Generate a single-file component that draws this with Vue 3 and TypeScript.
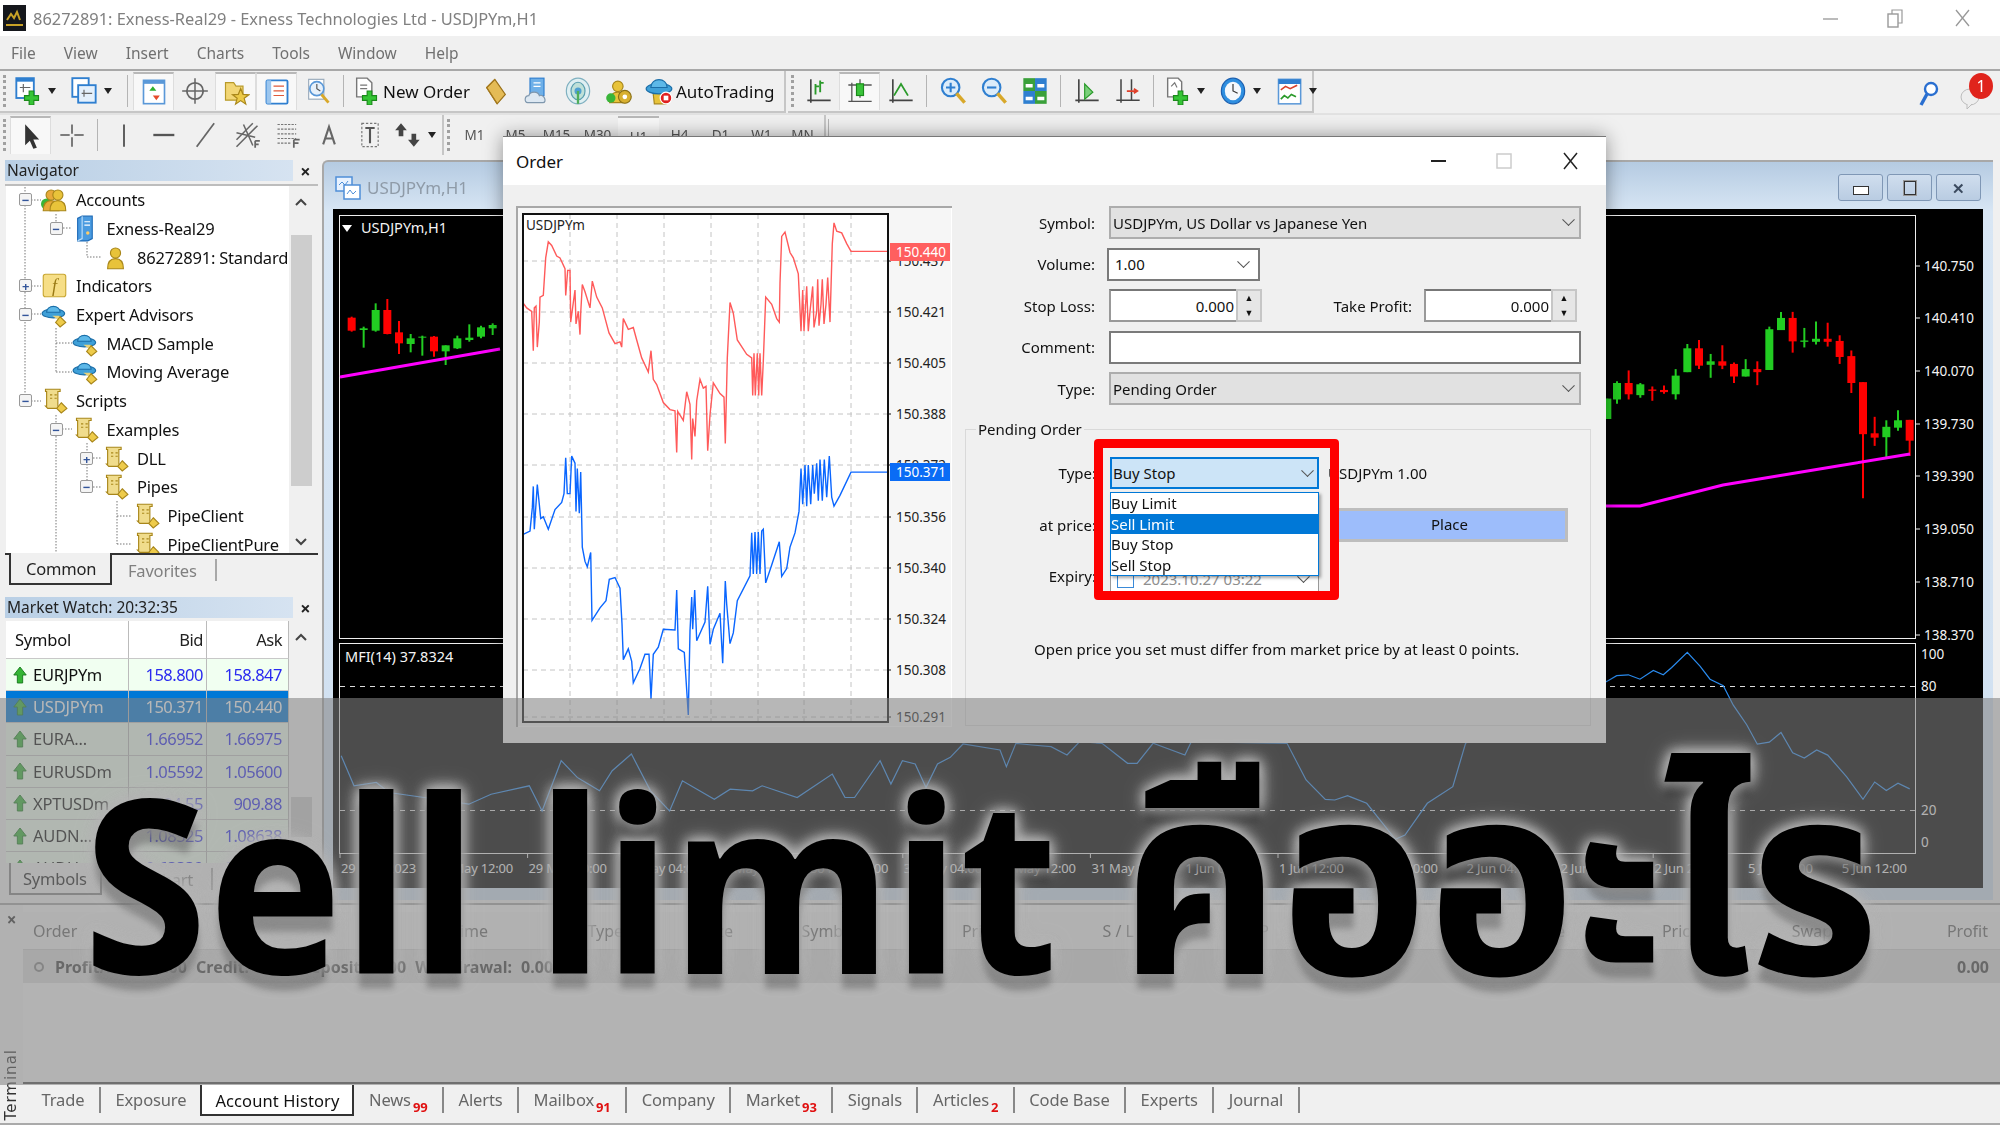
<template>
  <div class="shot">
    <div class="base">
      <div class="titlebar">
        <svg class="app-logo" viewBox="0 0 23 26"><rect width="23" height="26" fill="#15171c" /><path d="M4 15l4-6 3 4 3-6 3 8" fill="none" stroke="#c9a227" stroke-width="2" /><rect x="3" y="19" width="17" height="2" fill="#c9a227" /></svg>
        <span class="title-text">86272891: Exness-Real29 - Exness Technologies Ltd - USDJPYm,H1</span>
        <div class="win-ctl">
          <svg viewBox="0 0 150 24" width="150" height="24"><path d="M1 13h15" stroke="#aaa" stroke-width="1.6" /><rect x="66" y="8" width="10" height="13" fill="none" stroke="#999" stroke-width="1.4" /><path d="M70 8V4h10v13h-4" fill="none" stroke="#999" stroke-width="1.2" /><path d="M134 4l13 16M147 4l-13 16" stroke="#999" stroke-width="1.3" /></svg>
        </div>
      </div>
      <div class="menubar">
        <span v-for="m in menus" :key="m" class="menu-item">{{ m }}</span>
      </div>
      <div class="toolrow">
        <div v-for="(bar, i) in [tb1, tb2]" :key="i" class="toolbar" :class="'bar' + i">
          <template v-for="(it, n) in bar" :key="n">
            <i v-if="it.kind == 'grip'" class="grip"></i>
            <i v-else-if="it.kind == 'sep'" class="sep"></i>
            <div v-else class="tool" :class="{ sel: it.sel, drop: it.arrow, wide: it.label }">
              <svg class="ic" viewBox="0 0 24 24" v-html="icons[it.icon!]"></svg>
              <span v-if="it.label" class="tool-label">{{ it.label }}</span>
              <b v-if="it.arrow" class="caret"></b>
            </div>
          </template>
        </div>
        <div class="tool-right">
          <svg width="24" height="30" viewBox="0 0 24 30"><circle cx="14" cy="10" r="6" fill="#fff" stroke="#2a6fd0" stroke-width="2.4" /><path d="M10 15L4 26" stroke="#2a6fd0" stroke-width="3.4" /></svg>
          <div class="notif">
            <svg width="30" height="34" viewBox="0 0 30 34"><ellipse cx="11" cy="21" rx="9" ry="8" fill="#eee" stroke="#bbb" /><path d="M8 28v5l5-5" fill="#eee" stroke="#bbb" /></svg>
            <span class="badge">1</span>
          </div>
        </div>
      </div>
      <div class="toolrow second">
        <div class="toolbar bar2">
          <template v-for="(it, n) in tb3" :key="n">
            <i v-if="it.kind == 'grip'" class="grip"></i>
            <i v-else-if="it.kind == 'sep'" class="sep"></i>
            <div v-else class="tool" :class="{ sel: it.sel, drop: it.arrow }">
              <svg class="ic" viewBox="0 0 24 24" v-html="icons[it.icon!]"></svg>
              <b v-if="it.arrow" class="caret"></b>
            </div>
          </template>
        </div>
        <div class="toolbar bar3">
          <i class="grip"></i>
          <span v-for="t in frames" :key="t" class="frame" :class="{ sel: t == 'H1' }">{{ t }}</span>
          <i class="sep"></i>
        </div>
      </div>

      <div class="workspace">
        <div class="side">
          <div class="panel nav-panel">
            <div class="panel-head"><span>Navigator</span><em>×</em></div>
            <div class="tree-wrap">
              <div class="tree">
                <svg class="tree-lines" viewBox="6 184 282 369" width="282" height="369">
                  <path d="M25 184V401M25 200h16M25 286h16M25 314h16M25 401h16M56 214v14h16M87 242v15h14M56 328v44M56 343h16M56 372h16M56 415V553M56 429h16M87 443v44M87 458h14M87 487h14M117 501v43M117 516h14M117 544h14" fill="none" stroke="#777" stroke-dasharray="1.5 1.5" />
                </svg>
                <div v-for="row in tree" :key="row.text" class="tree-row" :style="{ paddingLeft: 13 + row.level * 30.5 + 'px' }">
                  <span class="expander" :class="{ none: !row.exp }">{{ row.exp }}</span>
                  <svg class="tree-icon" viewBox="0 0 24 24" v-html="icons[row.icon]"></svg>
                  <span class="tree-text">{{ row.text }}</span>
                </div>
              </div>
              <div class="vscroll">
                <svg class="chev" viewBox="0 0 14 8" width="14" height="8"><path d="M2 7l5-5 5 5" fill="none" stroke="#444" stroke-width="2" /></svg>
                <div class="thumb"></div>
                <svg class="chev down" viewBox="0 0 14 8" width="14" height="8"><path d="M2 1l5 5 5-5" fill="none" stroke="#444" stroke-width="2" /></svg>
              </div>
            </div>
            <div class="tabs">
              <span class="tab on">Common</span>
              <span class="tab">Favorites</span>
              <i class="tab-sep"></i>
            </div>
          </div>

          <div class="panel mw-panel">
            <div class="panel-head"><span>Market Watch: 20:32:35</span><em>×</em></div>
            <div class="mw-wrap">
              <div class="mw-table">
                <div class="mw-row mw-head"><span class="sym">Symbol</span><span class="num">Bid</span><span class="num">Ask</span></div>
                <div v-for="q in quotes" :key="q.sym" class="mw-row" :class="{ active: q.sym == 'USDJPYm' }">
                  <span class="sym">
                    <svg width="16" height="22" viewBox="0 0 18 22"><path d="M9 2l7 9h-4v9H6v-9H2z" fill="#35b535" stroke="#14761a" /></svg>
                    {{ q.sym }}
                  </span>
                  <span class="num">{{ q.bid }}</span><span class="num">{{ q.ask }}</span>
                </div>
              </div>
              <div class="vscroll mw-scroll">
                <svg class="chev" viewBox="0 0 14 8" width="14" height="8"><path d="M2 7l5-5 5 5" fill="none" stroke="#444" stroke-width="2" /></svg>
                <div class="thumb"></div>
              </div>
            </div>
            <div class="tabs">
              <span class="tab on">Symbols</span>
              <span class="tab">Tick Chart</span>
              <i class="tab-sep"></i>
            </div>
          </div>
        </div>

        <div class="chart-win">
          <div class="chart-head">
            <svg width="26" height="24" viewBox="0 0 26 24"><rect x="1" y="1" width="16" height="14" fill="#e8f2ff" stroke="#4f8fd8" stroke-width="1.5" /><rect x="9" y="9" width="16" height="14" fill="#fff" stroke="#4f8fd8" stroke-width="1.5" /><path d="M4 9l3-3 3 3 3-4M12 18l3-4 3 4 3-3" fill="none" stroke="#4f8fd8" /></svg>
            <span class="chart-name">USDJPYm,H1</span>
            <div class="chart-btns">
              <span class="cbtn"><i class="c-min"></i></span>
              <span class="cbtn"><i class="c-max"></i></span>
              <span class="cbtn c-x">✕</span>
            </div>
          </div>
          <svg class="chart-svg" viewBox="333 209 1650 679" width="1650" height="679">
            <rect x="333" y="209" width="1650" height="679" fill="#000" />
            <rect x="339.5" y="215.5" width="1576" height="423" fill="none" stroke="#eee" />
            <rect x="339.5" y="643.5" width="1576" height="210" fill="none" stroke="#eee" />
            <path d="M342 225h10l-5 7z" fill="#fff" />
            <text x="361" y="233" class="c-txt">USDJPYm,H1</text>
            <text x="345" y="662" class="c-txt">MFI(14) 37.8324</text>
            <template v-for="(c, i) in candles" :key="i">
              <line :x1="c.x" :x2="c.x" :y1="c.wt" :y2="c.wb" :stroke="c.col" stroke-width="2" />
              <rect :x="c.x - 4" :y="c.t" width="8" :height="c.b - c.t" :fill="c.col" />
            </template>
            <polyline points="340,377 420,363 500,349" fill="none" stroke="#ff00ff" stroke-width="3" />
            <polyline points="1606,506 1640,506 1723,485 1910,454" fill="none" stroke="#ff00ff" stroke-width="3" />
            <path d="M340 686.5H1916M340 810.5H1916" stroke="#ddd" stroke-dasharray="5 5" />
            <polyline :points="mfi" fill="none" stroke="#2a8cf0" stroke-width="1.2" />
            <template v-for="p in mainAxis" :key="p.t">
              <path :d="`M1916 ${p.y}h4`" stroke="#eee" />
              <text x="1924" :y="p.y + 5" class="c-txt axis">{{ p.t }}</text>
            </template>
            <text v-for="p in subAxis" :key="p.t" x="1921" :y="p.y + 5" class="c-txt axis">{{ p.t }}</text>
            <template v-for="p in timeAxis" :key="p.t">
              <path v-if="p.tick" :d="`M${p.x} 853v5`" stroke="#eee" />
              <text :x="p.x + 1" y="873" class="c-txt tick">{{ p.t }}</text>
            </template>
          </svg>
        </div>
      </div>

      <div class="terminal">
        <div class="term-main">
          <div class="term-side">
            <em>×</em>
            <span class="term-label">Terminal</span>
          </div>
          <div class="term-body">
            <div class="term-cols">
              <span v-for="(c, i) in termCols" :key="i" :class="{ left: i == 0 }">{{ c }}</span>
            </div>
            <div class="term-total">
              <span class="term-note"><i class="dot"></i>Profit/Loss: 0.00 Credit: 0.00 Deposit: 0.00 Withdrawal: 0.00</span>
              <span>0.00</span>
            </div>
          </div>
        </div>
        <div class="term-tabs">
          <span v-for="t in termTabs" :key="t.name" class="ttab" :class="{ on: t.name == 'Account History', flat: t.name == 'Exposure' }">{{ t.name }}<sub v-if="t.n">{{ t.n }}</sub></span>
        </div>
      </div>
    </div>

    <div class="order-dlg">
      <div class="dlg-title">
        <span>Order</span>
        <svg width="150" height="24" viewBox="0 0 150 24"><path d="M0 12h15" stroke="#222" stroke-width="2" /><rect x="66" y="5" width="14" height="14" fill="#fff" stroke="#ccc" stroke-width="1.5" /><path d="M133 4l13 16M146 4l-13 16" stroke="#222" stroke-width="1.5" /></svg>
      </div>
      <div class="dlg-body">
        <div class="mini">
          <svg viewBox="516 206 436 521" width="436" height="521">
            <rect x="523" y="214" width="365" height="508" fill="#fff" />
            <path v-for="g in miniGridX" :key="g" :d="`M${g} 214V722`" stroke="#c4c4c4" stroke-dasharray="5 4" />
            <path v-for="g in miniAxis" :key="g.t" :d="`M523 ${g.y}H888`" stroke="#c4c4c4" stroke-dasharray="5 4" />
            <polyline :points="askLine" fill="none" stroke="#ff5a5a" stroke-width="1.4" />
            <polyline :points="bidLine" fill="none" stroke="#0a66ff" stroke-width="1.4" />
            <rect x="523" y="214" width="365" height="508" fill="none" stroke="#111" stroke-width="2" />
            <text x="526" y="230" class="m-txt">USDJPYm</text>
            <template v-for="g in miniAxis" :key="g.t">
              <path :d="`M888 ${g.y}h3`" stroke="#111" />
              <text x="896" :y="g.y + 5" class="m-txt">{{ g.t }}</text>
            </template>
            <rect x="890" y="243" width="60" height="18" fill="#ff5f5f" />
            <text x="896" y="257" class="m-txt w">150.440</text>
            <rect x="890" y="463" width="60" height="18" fill="#0a6cf5" />
            <text x="896" y="477" class="m-txt w">150.371</text>
          </svg>
        </div>
        <div class="form">
          <div class="f-row"><label>Symbol:</label><div class="ctl select"><span>USDJPYm, US Dollar vs Japanese Yen</span><i class="vee"></i></div></div>
          <div class="f-row"><label>Volume:</label><div class="ctl input short"><span>1.00</span><i class="vee"></i></div></div>
          <div class="f-row tight">
            <label>Stop Loss:</label>
            <div class="ctl input short spin"><span>0.000</span><div class="spinner"><b>▲</b><b>▼</b></div></div>
            <label class="tp">Take Profit:</label>
            <div class="ctl input short spin"><span>0.000</span><div class="spinner"><b>▲</b><b>▼</b></div></div>
          </div>
          <div class="f-row tight"><label>Comment:</label><div class="ctl input"></div></div>
          <div class="f-row"><label>Type:</label><div class="ctl select"><span>Pending Order</span><i class="vee"></i></div></div>

          <div class="group">
            <span class="legend">Pending Order</span>
            <div class="g-row first">
              <label>Type:</label>
              <div class="ctl focus"><span>Buy Stop</span><i class="vee"></i>
                <div class="listbox">
                  <div v-for="o in pendingTypes" :key="o" class="opt" :class="{ hit: o == 'Sell Limit' }">{{ o }}</div>
                </div>
              </div>
              <span class="g-note">USDJPYm 1.00</span>
            </div>
            <div class="g-row mid">
              <label>at price:</label>
              <div class="ctl input mid-input"></div>
              <div class="place">Place</div>
            </div>
            <div class="g-row">
              <label>Expiry:</label>
              <div class="ctl input mid-input exp"><i class="chk"></i><span>2023.10.27 03:22</span><i class="vee"></i></div>
            </div>
            <p class="msg">Open price you set must differ from market price by at least 0 points.</p>
            <div class="redbox"></div>
          </div>
        </div>
      </div>
    </div>

    <div class="dim"></div>
    <div class="headline"><span>Sell limit</span><span class="th">คืออะไร</span></div>
  </div>
</template>

<script setup lang="ts">
import { computed } from 'vue'

interface Tool {
  kind?: string
  icon?: string
  sel?: boolean
  arrow?: boolean
  label?: string
}

const menus = ['File', 'View', 'Insert', 'Charts', 'Tools', 'Window', 'Help']
const frames = ['M1', 'M5', 'M15', 'M30', 'H1', 'H4', 'D1', 'W1', 'MN']
const pendingTypes = ['Buy Limit', 'Sell Limit', 'Buy Stop', 'Sell Stop']

const goldFig = (x: number, c = '#e8c33a') =>
  `<circle cx="${x}" cy="8" r="4.5" fill="${c}" stroke="#a8861a"/><path d="M${x - 7} 22c0-7 3-9 7-9s7 2 7 9z" fill="${c}" stroke="#a8861a"/>`
const hat =
  '<ellipse cx="11" cy="11" rx="10" ry="4" fill="#3fa0d8" stroke="#1b6ea8"/><path d="M5 10c0-7 12-7 12 0z" fill="#5db8e8" stroke="#1b6ea8"/><path d="M10 13h6l3 3-2 2z" fill="#e8d27a"/><path d="M17 14l5 5-5 4-4-4z" fill="#eecb4a" stroke="#a8861a"/>'
const scroll =
  '<path d="M4 2h13v2h-2v13l2 2H6l-2-2h1V4H4z" fill="#f0dc8c" stroke="#a8861a"/><path d="M8 7h2M12 7h2M8 10h2M12 10h2" stroke="#a8861a"/><path d="M18 14l5 5-5 4-4-4z" fill="#eecb4a" stroke="#a8861a"/>'
const plus = '<path d="M13 12h4v4h4v4h-4v4h-4v-4H9v-4h4z" fill="#35c535" stroke="#1a8a1a"/>'

const icons: Record<string, string> = {
  newChart: '<rect x="2" y="1" width="15" height="17" fill="#fff" stroke="#2f7fd0" stroke-width="1.6"/><rect x="2" y="1" width="15" height="3" fill="#2f7fd0"/><path d="M5 9h9M8 6v7" stroke="#666"/>' + plus,
  profile: '<rect x="2" y="1" width="14" height="16" fill="#fff" stroke="#2f7fd0" stroke-width="1.6"/><rect x="7" y="7" width="15" height="15" fill="#e4f0fc" stroke="#2f7fd0" stroke-width="1.6"/><path d="M10 14h9M12 11v6" stroke="#666"/>',
  watch: '<rect x="3" y="2" width="18" height="20" fill="#fff" stroke="#5a98d8" stroke-width="1.4"/><rect x="3" y="2" width="18" height="3" fill="#5a98d8"/><path d="M11 7l3 4H8z" fill="#2db02d"/><path d="M14 19l-3-4h6z" fill="#e64a2a"/>',
  cross: '<circle cx="12" cy="12" r="7" fill="none" stroke="#666" stroke-width="1.5"/><path d="M12 1v22M1 12h22" stroke="#666" stroke-width="1.3"/>',
  folder: '<path d="M3 4h7l2 3h6v12H3z" fill="#f2d675" stroke="#b89a2a"/><path d="M16 9l2 5 5 .4-4 3 1.4 5-4.4-3-4.4 3 1.4-5-4-3 5-.4z" fill="#ecca48" stroke="#a8861a"/>',
  list: '<rect x="3" y="2" width="18" height="20" rx="1" fill="#fff" stroke="#2f7fd0" stroke-width="1.6"/><path d="M3 2h4v20H3z" fill="#9cc6ee"/><path d="M9 7h9M9 11h9M9 15h9" stroke="#e05a3a"/>',
  tester: '<rect x="4" y="2" width="13" height="17" fill="#fff" stroke="#9ab"/><circle cx="11" cy="10" r="6" fill="#e6f0fa" stroke="#5a98d8" stroke-width="1.4"/><path d="M11 6v4l3 2" fill="none" stroke="#555"/><path d="M15 15l6 7" stroke="#d8a82a" stroke-width="2.4"/>',
  order: '<path d="M4 1h9l4 4v12H4z" fill="#fff" stroke="#777" stroke-width="1.2"/><path d="M7 7h6M7 10h6" stroke="#777"/>' + plus,
  diamond: '<path d="M11 2l9 13-7 8-9-14z" fill="#e4bb56" stroke="#99701a"/><path d="M11 2l-7 7 9 14" fill="none" stroke="#a67a1e"/>',
  cloud: '<rect x="6" y="1" width="12" height="15" fill="#6fb0e8" stroke="#2f7fd0"/><path d="M9 5h6M9 8h6" stroke="#fff"/><path d="M4 22c-3 0-3-6 1-6 1-4 8-4 9 0 4-2 7 6 3 6z" fill="#dde8f2" stroke="#7f97ad"/>',
  signal: '<ellipse cx="12" cy="12" rx="10" ry="11" fill="#dfeff2" stroke="#7fb0c0"/><ellipse cx="12" cy="12" rx="6" ry="7.5" fill="#bfe0d8" stroke="#5a9fb0"/><circle cx="12" cy="12" r="3" fill="#4f9fd0"/><path d="M12 12v11" stroke="#4fae5a" stroke-width="2"/>',
  people: goldFig(11) + '<circle cx="17" cy="17" r="5.5" fill="#d8b030" stroke="#8a7016"/><circle cx="17" cy="17" r="2" fill="#fff"/><circle cx="5" cy="18" r="4" fill="#39b539"/>',
  auto: '<path d="M7 14h13l-2 9H8z" fill="#e8c33a" stroke="#a8861a"/><ellipse cx="12" cy="10" rx="11" ry="4.5" fill="#3fa0d8" stroke="#1b6ea8"/><path d="M5 9c0-9 14-9 14 0z" fill="#5db8e8" stroke="#1b6ea8"/><circle cx="18" cy="18" r="5" fill="#e02020" stroke="#fff"/><rect x="16" y="16" width="4" height="4" fill="#fff"/>',
  bars: '<path d="M5 2v20M2 20h20" stroke="#444" stroke-width="1.4"/><path d="M9 6v9M9 8h3M13 3v10M13 5h3" stroke="#2a9a2a" stroke-width="1.6"/>',
  candle: '<path d="M5 4v16M2 20h20M2 6h20M12 1v16" stroke="#555" stroke-width="1.1"/><rect x="9" y="5" width="6" height="10" fill="#3ac33a" stroke="#1a8a1a"/>',
  line: '<path d="M5 2v20M2 20h20" stroke="#444" stroke-width="1.4"/><path d="M6 16l6-10 6 10" fill="none" stroke="#2a9a2a" stroke-width="1.5"/>',
  zoomIn: '<circle cx="10" cy="9" r="7.5" fill="#dcecfa" stroke="#2f7fd0" stroke-width="1.8"/><path d="M10 5v8M6 9h8" stroke="#2f7fd0" stroke-width="1.8"/><path d="M15 14l7 8" stroke="#d8a82a" stroke-width="3"/>',
  zoomOut: '<circle cx="10" cy="9" r="7.5" fill="#dcecfa" stroke="#2f7fd0" stroke-width="1.8"/><path d="M6 9h8" stroke="#2f7fd0" stroke-width="1.8"/><path d="M15 14l7 8" stroke="#d8a82a" stroke-width="3"/>',
  tile: '<rect x="2" y="1" width="10" height="11" fill="#3aa03a"/><rect x="12" y="1" width="10" height="11" fill="#2f7fd0"/><rect x="2" y="12" width="10" height="11" fill="#2f7fd0"/><rect x="12" y="12" width="10" height="11" fill="#3aa03a"/><path d="M4 6h6v3H4zM14 6h6v3h-6zM4 17h6v3H4zM14 17h6v3h-6z" fill="#fff"/>',
  shift: '<path d="M5 2v20M2 20h20" stroke="#444" stroke-width="1.4"/><path d="M10 6l7 7-7 6z" fill="#7ad07a" stroke="#2a9a2a"/>',
  scaleFix: '<path d="M6 2v20M2 20h20M15 2v18" stroke="#444" stroke-width="1.3"/><path d="M11 12h8M17 10l3 2-3 2" stroke="#e0402a" stroke-width="1.5" fill="none"/>',
  indic: '<path d="M4 1h9l3 3v13H4z" fill="#fff" stroke="#777" stroke-width="1.2"/><path d="M7 8l3-3 2 4" fill="none" stroke="#777"/>' + plus,
  clock: '<ellipse cx="12" cy="12" rx="10" ry="11" fill="#2f8fe0" stroke="#1a5fb0"/><ellipse cx="12" cy="12" rx="7" ry="8" fill="#f4f8fc"/><path d="M12 6v6l4 2" fill="none" stroke="#333"/>',
  tpl: '<rect x="3" y="2" width="19" height="21" fill="#fff" stroke="#5a98d8" stroke-width="1.3"/><rect x="3" y="2" width="19" height="4" fill="#2f7fd0"/><path d="M5 11l4-3 4 2 6-3" fill="none" stroke="#d8402a" stroke-width="1.4"/><path d="M5 19l3-3 3 2 3-3 4 2" fill="none" stroke="#2a9a2a" stroke-width="1.4"/>',
  cursor: '<path d="M7 2v18l4-4 3 7 3-1-3-7h5z" fill="#333"/>',
  crossH: '<path d="M12 3v8M12 14v8M2 12h8M14 12h8" stroke="#555" stroke-width="1.3"/>',
  vline: '<path d="M12 3v19" stroke="#555" stroke-width="1.6"/>',
  hline: '<path d="M2 12h18" stroke="#555" stroke-width="2"/>',
  trend: '<path d="M4 22L19 2" stroke="#666" stroke-width="1.5"/>',
  channel: '<path d="M3 16L17 2M3 22L21 4M9 3l8 18M3 10l16 4" stroke="#666" stroke-width="1.3"/><path d="M19 17h4M19 17v6M19 20h3" stroke="#666" stroke-width="1.5"/>',
  fibo: '<path d="M3 3h16M3 7h16M3 11h16M3 15h16M3 19h11" stroke="#777" stroke-dasharray="2 1"/><path d="M17 16h5M17 16v7M17 19h4" stroke="#666" stroke-width="1.5"/>',
  letter: '<path d="M7 20l5-15 5 15M9 15h6" fill="none" stroke="#666" stroke-width="1.8"/>',
  label: '<rect x="5" y="2" width="14" height="20" fill="none" stroke="#777" stroke-dasharray="2 1.5"/><path d="M8 6h8M12 6v13" stroke="#555" stroke-width="1.8"/>',
  arrows: '<path d="M6 2l5 6H8v5H4V8H1zM17 22l-5-6h3v-5h4v5h3z" fill="#444"/>',
  accounts: '<circle cx="5" cy="16" r="5" fill="#39b539"/>' + goldFig(9, '#e8a93a') + goldFig(15),
  server: '<path d="M5 3l4-2h9v20l-4 2H5z" fill="#4a9be0" stroke="#1f6cb8"/><path d="M9 1v20l-4 2" fill="none" stroke="#bfe0fa"/><path d="M11 6h5M11 9h5" stroke="#fff"/><circle cx="14" cy="16" r="1.500" fill="#fc6"/>',
  user: goldFig(12),
  func: '<rect x="2" y="2" width="20" height="20" rx="2" fill="#f6de86" stroke="#c8a630"/><text x="12" y="18" text-anchor="middle" font-size="16" font-style="italic" font-family="Liberation Serif" fill="#9a7a14">f</text>',
  hat,
  scroll
}

const G = (icon: string, extra: Partial<Tool> = {}): Tool => ({ icon, ...extra })
const tb1: Tool[] = [
  { kind: 'grip' }, G('newChart', { arrow: true }), G('profile', { arrow: true }), { kind: 'sep' },
  G('watch', { sel: true }), G('cross'), G('folder', { sel: true }), G('list', { sel: true }), G('tester'), { kind: 'sep' },
  G('order', { label: 'New Order' }), G('diamond'), G('cloud'), G('signal'), G('people'), G('auto', { label: 'AutoTrading' })
]
const tb2: Tool[] = [
  { kind: 'grip' }, G('bars'), G('candle', { sel: true }), G('line'), { kind: 'sep' },
  G('zoomIn'), G('zoomOut'), G('tile'), { kind: 'sep' }, G('shift'), G('scaleFix'), { kind: 'sep' },
  G('indic', { arrow: true }), G('clock', { arrow: true }), G('tpl', { arrow: true })
]
const tb3: Tool[] = [
  { kind: 'grip' }, G('cursor', { sel: true }), G('crossH'), { kind: 'sep' }, G('vline'), G('hline'), G('trend'), G('channel'),
  G('fibo'), G('letter'), G('label'), G('arrows', { arrow: true })
]

const tree = [
  { level: 0, exp: '−', icon: 'accounts', text: 'Accounts' },
  { level: 1, exp: '−', icon: 'server', text: 'Exness-Real29' },
  { level: 2, exp: '', icon: 'user', text: '86272891: Standard' },
  { level: 0, exp: '+', icon: 'func', text: 'Indicators' },
  { level: 0, exp: '−', icon: 'hat', text: 'Expert Advisors' },
  { level: 1, exp: '', icon: 'hat', text: 'MACD Sample' },
  { level: 1, exp: '', icon: 'hat', text: 'Moving Average' },
  { level: 0, exp: '−', icon: 'scroll', text: 'Scripts' },
  { level: 1, exp: '−', icon: 'scroll', text: 'Examples' },
  { level: 2, exp: '+', icon: 'scroll', text: 'DLL' },
  { level: 2, exp: '−', icon: 'scroll', text: 'Pipes' },
  { level: 3, exp: '', icon: 'scroll', text: 'PipeClient' },
  { level: 3, exp: '', icon: 'scroll', text: 'PipeClientPure' }
]

const quotes = [
  { sym: 'EURJPYm', bid: '158.800', ask: '158.847' },
  { sym: 'USDJPYm', bid: '150.371', ask: '150.440' },
  { sym: 'EURA...', bid: '1.66952', ask: '1.66975' },
  { sym: 'EURUSDm', bid: '1.05592', ask: '1.05600' },
  { sym: 'XPTUSDm', bid: '904.55', ask: '909.88' },
  { sym: 'AUDN...', bid: '1.08525', ask: '1.08638' },
  { sym: 'AUDU...', bid: '0.63339', ask: '0.63350' }
]

const termCols = ['Order', 'Time', 'Type', 'Size', 'Symbol', 'Price', 'S / L', 'T / P', 'Time', 'Price', 'Swap', 'Profit']
const termTabs = [
  { name: 'Trade' }, { name: 'Exposure' }, { name: 'Account History' }, { name: 'News', n: 99 }, { name: 'Alerts' },
  { name: 'Mailbox', n: 91 }, { name: 'Company' }, { name: 'Market', n: 93 }, { name: 'Signals' }, { name: 'Articles', n: 2 },
  { name: 'Code Base' }, { name: 'Experts' }, { name: 'Journal' }
]

// candle data: x, body top, body bottom, wick top, wick bottom, bullish
type Raw = [number, number, number, number, number, number]
const leftRaw: Raw[] = [
  [1025, 418, 515, 400, 520, 0], [1055, 503, 542, 500, 545, 0], [1091, 535, 540, 530, 593, 1], [1127, 480, 542, 460, 545, 1],
  [1162, 480, 552, 447, 553, 0], [1197, 547, 580, 513, 612, 0], [1232, 565, 582, 552, 607, 1], [1267, 560, 563, 557, 617, 1],
  [1302, 560, 604, 558, 620, 0], [1337, 586, 604, 586, 645, 1], [1372, 565, 595, 557, 597, 1], [1408, 563, 570, 523, 575, 1],
  [1443, 532, 560, 527, 565, 1], [1478, 525, 535, 520, 555, 1]
]
const rightRaw: Raw[] = [
  [322, 458, 505, 458, 505, 1], [351, 422, 460, 418, 470, 1], [386, 422, 448, 393, 460, 0], [421, 425, 450, 422, 456, 1],
  [457, 437, 440, 430, 463, 0], [492, 438, 443, 428, 447, 0], [527, 405, 448, 390, 460, 1], [562, 342, 397, 332, 397, 1],
  [597, 342, 382, 323, 390, 0], [632, 372, 380, 355, 410, 1], [667, 372, 382, 335, 390, 0], [702, 378, 407, 375, 422, 0],
  [737, 390, 407, 367, 407, 1], [772, 390, 397, 372, 427, 0], [808, 298, 392, 292, 392, 1], [843, 272, 300, 258, 300, 1],
  [878, 272, 326, 258, 352, 0], [913, 324, 327, 295, 340, 1], [948, 320, 327, 280, 333, 1], [983, 320, 327, 283, 338, 0],
  [1019, 325, 362, 312, 378, 0], [1054, 360, 422, 347, 445, 0], [1089, 420, 540, 420, 688, 0], [1124, 538, 548, 500, 567, 0],
  [1159, 523, 547, 508, 597, 1], [1194, 508, 525, 485, 532, 1], [1229, 507, 555, 507, 590, 0]
]
const candles = computed(() => {
  const a = leftRaw.map(r => ({
    x: r[0] / 3, t: r[1] / 3 + 150, b: r[2] / 3 + 150, wt: r[3] / 3 + 150, wb: r[4] / 3 + 150, col: r[5] ? '#22cc22' : '#ff0000'
  }))
  const b = rightRaw.map(r => ({
    x: r[0] / 3 + 1500, t: r[1] / 2.306 + 200, b: r[2] / 2.306 + 200, wt: r[3] / 2.306 + 200, wb: r[4] / 2.306 + 200, col: r[5] ? '#22cc22' : '#ff0000'
  }))
  return [...a, ...b].filter(c => c.x > 342)
})

const mfiLeft = [535,465, 555,555, 590,545, 610,575, 665,590, 735,610, 770,580, 830,555, 850,630, 880,480, 905,530, 940,570, 960,510, 990,460, 1020,570, 1050,630, 1070,540, 1120,595, 1145,565, 1180,570, 1195,555, 1250,590, 1305,520, 1325,590, 1340,590, 1380,480, 1397,550, 1415,480, 1435,490, 1452,560, 1470,490, 1490,470, 1510,430]
const mfiMid = [0,150, 10,200, 25,130, 50,135, 80,140, 105,165, 125,125, 160,130, 200,190, 215,190, 240,130, 290,165, 300,125, 450,130, 480,240, 510,298, 525,300, 545,287, 575,310, 620,418, 635,405, 670,310, 710,260, 730,130]
const mfiRight = [320,1110, 350,1097, 385,1095, 420,1105, 460,1085, 490,1095, 515,1078, 562,1043, 600,1075, 630,1105, 670,1120, 700,1165, 740,1210, 772,1255, 808,1250, 843,1228, 878,1275, 913,1287, 950,1268, 983,1280, 1040,1330, 1089,1382, 1124,1342, 1159,1362, 1194,1345, 1229,1358]
const pairs = (d: number[], fx: (x: number) => number, fy: (y: number) => number) => {
  const out: string[] = []
  for (let i = 0; i < d.length; i += 2) out.push(fx(d[i]).toFixed(1) + ',' + fy(d[i + 1]).toFixed(1))
  return out
}
const mfi = [
  ...pairs(mfiLeft, x => x / 1.568, y => y / 2.987 + 600),
  ...pairs(mfiMid, x => x / 1.568 + 1000, y => y / 3 + 700),
  ...pairs(mfiRight, x => x / 3 + 1500, y => y / 2.306 + 200)
].join(' ')

const mainAxis = [['140.750', 266], ['140.410', 318], ['140.070', 371], ['139.730', 424], ['139.390', 476], ['139.050', 529], ['138.710', 582], ['138.370', 635]]
  .map(p => ({ t: p[0] as string, y: p[1] as number }))
const subAxis = [{ t: '100', y: 654 }, { t: '80', y: 686 }, { t: '20', y: 810 }, { t: '0', y: 842 }]
const timeAxis = ['29 May 2023', '29 May 12:00', '29 May 20:00', '30 May 04:00', '30 May 12:00', '30 May 20:00', '31 May 04:00', '31 May 12:00', '31 May 20:00', '1 Jun 04:00', '1 Jun 12:00', '1 Jun 20:00', '2 Jun 04:00', '2 Jun 12:00', '2 Jun 20:00', '5 Jun 04:00', '5 Jun 12:00']
  .map((t, i) => ({ t, x: 340 + i * 93.8, tick: i % 2 == 0 }))

const miniGridX = [570, 617, 664, 711, 758, 804, 851]
const miniAxis = [['150.437', 261], ['150.421', 312], ['150.405', 363], ['150.388', 414], ['150.372', 465], ['150.356', 517], ['150.340', 568], ['150.324', 619], ['150.308', 670], ['150.291', 717]]
  .map(p => ({ t: p[0] as string, y: p[1] as number }))

const ask = [68,315, 80,330, 95,340, 100,450, 103,330, 108,325, 112,440, 118,370, 120,300, 130,295, 137,190, 145,145, 155,155, 170,185, 180,190, 195,220, 197,295, 203,225, 210,225, 212,370, 225,280, 228,375, 235,340, 240,405, 242,345, 247,265, 255,285, 270,330, 277,255, 290,300, 307,330, 327,400, 345,430, 360,425, 365,440, 370,360, 385,390, 400,385, 410,420, 425,470, 445,510, 453,450, 460,530, 470,545, 490,595, 510,615, 525,618, 530,735, 533,620, 550,645, 560,565, 570,600, 575,755, 578,640, 585,690, 590,590, 600,530, 610,555, 618,550, 623,730, 630,630, 640,540, 660,570, 672,580, 676,710, 682,470, 690,315, 700,345, 712,420, 740,460, 755,470, 758,575, 762,457, 766,575, 772,457, 776,575, 780,457, 785,575, 790,480, 797,300, 815,320, 830,360, 838,370, 840,260, 845,130, 855,118, 870,175, 880,190, 895,235, 903,395, 908,280, 912,395, 920,270, 925,395, 930,340, 938,270, 942,385, 950,340, 953,250, 957,380, 963,320, 967,250, 972,375, 978,320, 983,245, 990,370, 997,150, 1002,92, 1010,115, 1025,120, 1040,150, 1053,172, 1163,172]
const bid = [68,965, 90,955, 97,890, 100,830, 103,950, 112,825, 118,880, 122,920, 130,915, 145,950, 165,895, 185,875, 192,850, 197,750, 202,850, 210,850, 215,745, 225,765, 228,900, 232,780, 238,905, 242,790, 247,1000, 255,1040, 262,1055, 272,1015, 276,1205, 300,1170, 318,1150, 328,1090, 345,1085, 360,1115, 366,1215, 370,1315, 385,1285, 395,1320, 400,1380, 420,1340, 435,1300, 447,1300, 453,1425, 460,1300, 475,1280, 490,1230, 525,1232, 530,1120, 535,1285, 553,1295, 560,1400, 565,1470, 570,1235, 575,1140, 578,1230, 584,1120, 590,1262, 615,1210, 623,1110, 630,1272, 640,1230, 660,1185, 668,1325, 676,1095, 680,1160, 690,1270, 700,1240, 712,1150, 750,1080, 755,960, 760,1075, 765,958, 770,1075, 775,958, 780,1075, 785,955, 790,950, 797,1100, 815,1050, 838,985, 845,1082, 860,1060, 870,1000, 885,960, 897,900, 903,780, 908,880, 915,770, 920,885, 925,770, 932,880, 938,770, 943,850, 950,765, 955,870, 960,755, 967,870, 973,755, 980,860, 988,745, 995,860, 1002,885, 1020,855, 1053,790, 1163,790]
const askLine = pairs(ask, x => x / 3 + 500, y => y / 2.8 + 190).join(' ')
const bidLine = pairs(bid, x => x / 3 + 500, y => y / 2.8 + 190).join(' ')
</script>

<style>
html, body { margin: 0; background: #f0f0f0; }
</style>

<style scoped>
.shot {
  position: relative;
  width: 2000px;
  height: 1125px;
  overflow: hidden;
  background: #f0f0f0;
  font-family: "Noto Sans", "Open Sans", sans-serif;
  color: #111;
}
.base, .order-dlg { filter: blur(0.45px); }
.titlebar {
  height: 36px;
  background: #fff;
  display: flex;
  align-items: center;
  padding-left: 3px;
}
.app-logo { width: 23px; height: 26px; }
.title-text { margin-left: 7px; font-size: 16.4px; color: #808080; }
.win-ctl { margin-left: auto; margin-right: 28px; height: 24px; }
.menubar {
  height: 33px;
  display: flex;
  align-items: center;
  border-bottom: 2px solid #a8a8a8;
  padding-left: 11px;
  gap: 24px;
  font-size: 15.5px;
  color: #707070;
}
.menu-item:nth-child(n + 2) { margin-left: 4px; }
.toolrow { display: flex; height: 42px; border-bottom: 2px solid #e2e2e2; }
.toolrow.second { height: 40px; border-bottom: none; }
.toolbar { display: flex; align-items: center; box-sizing: border-box; border-right: 2px solid #c6c6c6; border-bottom: 2px solid #c6c6c6; }
.bar0 { width: 786px; }
.bar1 { width: 526px; margin-left: 2px; }
.bar2 { width: 444px; border-bottom: none; }
.bar3 { width: 382px; border-bottom: none; }
.grip { width: 4px; height: 32px; margin: 0 3px; border-left: 3px dotted #a0a0a0; box-sizing: border-box; flex: none; }
.sep { width: 1px; height: 32px; background: #b4b4b4; margin: 0 5px; flex: none; }
.tool {
  width: 41px;
  height: 38px;
  flex: none;
  display: flex;
  align-items: center;
  justify-content: center;
  box-sizing: border-box;
}
.ic { width: 28px; height: 28px; flex: none; }
.tool.sel { background: #f8f8f8; border-top: 2px solid #b8b8b8; border-left: 1px solid #ddd; border-right: 1px solid #ddd; }
.tool.drop { width: 56px; justify-content: flex-start; padding-left: 4px; gap: 6px; }
.tool.wide { width: auto; padding-left: 3px; gap: 3px; margin-right: 6px; }
.tool.wide:last-child { margin-left: 2px; }
.caret { width: 0; height: 0; border: 4px solid transparent; border-top: 6px solid #222; border-bottom: none; }
.tool-label { font-size: 17px; white-space: nowrap; }
.tool-right { margin-left: auto; display: flex; align-items: center; gap: 18px; padding-right: 7px; padding-top: 4px; }
.notif { position: relative; width: 34px; height: 36px; }
.badge {
  position: absolute;
  right: 0;
  top: -3px;
  width: 24px;
  height: 26px;
  border-radius: 50%;
  background: #e0241c;
  color: #fff;
  font-size: 16px;
  text-align: center;
  line-height: 26px;
}
.frame { width: 41px; text-align: center; font-size: 13.5px; color: #555; line-height: 38px; height: 38px; box-sizing: border-box; flex: none; }
.frame.sel { background: #f8f8f8; border-top: 2px solid #b8b8b8; }

.workspace { display: flex; height: 748px; background: #f0f0f0; }
.side { width: 318px; flex: none; padding-top: 5px; box-sizing: border-box; }
.panel { width: 313px; margin-left: 5px; }
.panel-head {
  height: 21px;
  display: flex;
  align-items: center;
  justify-content: space-between;
  font-size: 15.5px;
  color: #222;
}
.panel-head span {
  flex: 1;
  height: 21px;
  line-height: 21px;
  padding-left: 2px;
  background: linear-gradient(to right, #b9cfe5, #d6e3f1);
}
.panel-head em { width: 25px; text-align: center; font-style: normal; font-weight: 700; font-size: 18px; }
.tree-wrap { display: flex; height: 369px; margin-top: 3px; border-top: 2px solid #bdbdbd; box-sizing: border-box; }
.tree { width: 283px; height: 367px; overflow: hidden; background: #fff; position: relative; margin-left: 1px; }
.tree-lines { position: absolute; left: 0; top: -2px; }
.tree-row { height: 28.7px; display: flex; align-items: center; position: relative; font-size: 16.5px; letter-spacing: -0.2px; margin-top: -0.5px; padding-bottom: 0.5px; }
.expander {
  width: 13px;
  height: 13px;
  border: 1px solid #999;
  border-radius: 2px;
  background: #f4f4f4;
  color: #33559a;
  font-size: 13px;
  line-height: 12px;
  text-align: center;
  box-sizing: border-box;
  flex: none;
  font-weight: 700;
}
.expander.none { visibility: hidden; }
.tree-icon { width: 27px; height: 27px; margin-left: 9px; flex: none; }
.tree-text { margin-left: 8px; white-space: nowrap; }
.vscroll { width: 25px; position: relative; background: #f0f0f0; }
.thumb { position: absolute; left: 2px; right: 2px; top: 49px; height: 251px; background: #cdcdcd; }
.chev { position: absolute; left: 5px; top: 12px; }
.chev.down { top: 352px; }
.tabs { height: 32px; display: flex; border-top: 2px solid #333; box-sizing: border-box; align-items: center; font-size: 16.5px; color: #808080; letter-spacing: -0.2px; }
.tab { padding: 0 16px; height: 100%; display: flex; align-items: center; box-sizing: border-box; white-space: nowrap; }
.tab.on { color: #222; background: #f0f0f0; border: 2px solid #333; border-top: none; margin-top: -2px; height: 32px; margin-left: 4px; padding: 0 15px 0 15px; width: 103px; }
.tab-sep { width: 2px; height: 22px; background: #a8a8a8; margin-left: 2px; }
.mw-panel { margin-top: 12px; }
.mw-wrap { display: flex; height: 242px; margin-top: 3px; overflow: hidden; }
.mw-table { width: 283px; margin-left: 1px; background: #fff; margin-top: -1px; }
.mw-row { display: grid; grid-template-columns: 123px 78px 82px; height: 32.2px; font-size: 16.5px; background: #f1fff1; letter-spacing: -0.2px; }
.mw-row > span { border-right: 1px solid #bbb; border-bottom: 1px solid #c8c8c8; display: flex; align-items: center; box-sizing: border-box; }
.mw-head { height: 39px; background: #fff; }
.mw-head .sym { padding-left: 9px; }
.mw-head .num { color: #222; }
.sym { padding-left: 6px; white-space: nowrap; overflow: hidden; gap: 5px; }
.num { justify-content: flex-end; padding-right: 3px; color: #2a2af0; letter-spacing: -0.5px; }
.mw-row > .num:last-child { padding-right: 6px; }
.mw-row.active { background: #0078d7; color: #fff; }
.mw-row.active .num { color: #fff; }
.mw-scroll .thumb { top: 176px; height: 40px; }
.mw-panel .tabs { border-top: none; }
.mw-panel .tab.on { margin-top: 0; height: 32px; border: 2px solid #888; border-top: none; width: 93px; padding: 0 12px; }

.chart-win {
  width: 1671px;
  height: 740px;
  margin: 5px 0 0 4px;
  background: linear-gradient(to bottom, #b5cbe2, #d8e6f4 50px, #cfdff0);
  border-top: 2px solid #a8a8a8;
  border-left: 2px solid #a8a8a8;
  border-radius: 6px 0 0 0;
  box-sizing: border-box;
  padding-left: 9px;
}
.chart-head { height: 47px; display: flex; align-items: center; gap: 6px; margin-left: 2px; padding-top: 4px; box-sizing: border-box; }
.chart-name { font-size: 17px; color: #8f9ba8; }
.chart-btns { margin-left: auto; margin-right: 12px; display: flex; gap: 4px; }
.cbtn {
  width: 45px;
  height: 27px;
  border: 1px solid #7f97b5;
  border-radius: 3px;
  background: linear-gradient(#d0deee, #b9cce2);
  display: flex;
  align-items: center;
  justify-content: center;
  box-sizing: border-box;
  color: #3b4a5f;
  font-size: 15px;
  font-weight: 700;
}
.c-min { width: 14px; height: 7px; border: 1px solid #333; background: #fff; margin-top: 5px; }
.c-max { width: 10px; height: 12px; border: 1px solid #333; outline: 1px solid #999; }
.chart-svg { display: block; }
.c-txt { fill: #f4f4f4; font-size: 14.5px; font-family: "Noto Sans", sans-serif; }
.c-txt.axis { font-size: 13.5px; }
.c-txt.tick { font-size: 13px; letter-spacing: -0.2px; }

.terminal { height: 222px; }
.term-main { display: flex; height: 181px; border-top: 2px solid #a8a8a8; box-sizing: border-box; }
.term-side { width: 23px; position: relative; }
.term-side em { display: block; text-align: center; font-style: normal; font-size: 17px; font-weight: 700; line-height: 24px; color: #333; margin-top: 3px; }
.term-label {
  position: absolute;
  left: 0;
  bottom: -36px;
  width: 23px;
  writing-mode: vertical-rl;
  transform: rotate(180deg);
  font-size: 15px;
  font-family: "DejaVu Sans", sans-serif;
  letter-spacing: 1px;
  line-height: 23px;
  color: #333;
}
.term-body { flex: 1; background: #f6f6f6; border-bottom: 2px solid #555; }
.term-cols {
  height: 37px;
  background: #f0f0f0;
  display: grid;
  grid-template-columns: 150px 317px 135px 110px 124px 142px 135px 135px 296px 134px 133px 156px;
  align-items: center;
  font-size: 16px;
  color: #666;
  border-bottom: 1px solid #ccc;
  margin-top: 7px;
}
.term-cols span { text-align: right; padding-right: 2px; }
.term-cols span.left { text-align: left; padding-left: 10px; }
.term-total {
  height: 33px;
  background: #dcdcdc;
  display: flex;
  align-items: center;
  justify-content: space-between;
  padding: 0 11px 0 11px;
  font-size: 16px;
  font-weight: 700;
  color: #444;
  word-spacing: 5px;
}
.term-note { display: flex; align-items: center; gap: 11px; }
.dot { width: 10px; height: 10px; border: 2px solid #888; border-radius: 50%; box-sizing: border-box; }
.term-tabs { height: 41px; display: flex; align-items: flex-start; padding: 3px 0 0 27px; font-size: 16.5px; color: #666; border-bottom: 2px solid #aaa; box-sizing: border-box; letter-spacing: -0.12px; }
.ttab { padding: 0 14.500px; border-right: 2px solid #888; line-height: 26px; white-space: nowrap; }
.ttab.flat { border-right: none; padding-right: 14px; }
.ttab.on { background: #fff; color: #111; border: 2px solid #333; border-top: none; height: 31px; margin: -2px 0 0 0; padding: 3px 13px 0; box-sizing: border-box; letter-spacing: 0.1px; }
.ttab sub { color: #e01010; font-size: 13px; font-weight: 700; margin-left: 2px; vertical-align: -6px; line-height: 0; }

.order-dlg {
  position: absolute;
  left: 503px;
  top: 136px;
  width: 1103px;
  height: 607px;
  background: #f0f0f0;
  box-shadow: 0 0 18px rgba(0, 0, 0, 0.4);
  border-top: 1px solid #777;
  box-sizing: border-box;
}
.dlg-title { height: 48px; background: #fff; display: flex; align-items: center; justify-content: space-between; padding: 0 25px 0 13px; font-size: 17px; }
.dlg-body { display: flex; padding: 21px 15px 0 13px; gap: 13px; }
.mini { width: 436px; height: 521px; flex: none; background: #f6f6f6; box-shadow: inset 2px 2px 0 #a8a8a8, inset -1px -1px 0 #fff; }
.mini svg { display: block; }
.m-txt { fill: #222; font-size: 13.5px; font-family: "Noto Sans", sans-serif; }
.m-txt.w { fill: #fff; }
.form { width: 626px; font-size: 15px; }
.f-row { display: flex; align-items: center; height: 33px; margin-bottom: 8.6px; padding-right: 10px; }
.f-row label, .g-row label { width: 130px; text-align: right; flex: none; white-space: nowrap; }
.ctl { margin-left: 14px; height: 33px; flex: 1; box-sizing: border-box; display: flex; align-items: center; position: relative; }
.select { background: #e1e1e1; border: 2px solid #adadad; padding: 0 2px; }
.input { background: #fff; border: 2px solid #7a7a7a; padding: 0 6px; }
.short { flex: none; width: 153px; }
.vee { width: 8px; height: 8px; border-right: 1.5px solid #555; border-bottom: 1.5px solid #555; transform: rotate(45deg) translate(-2px, -2px); margin-left: auto; margin-right: 4px; flex: none; }
.spin { justify-content: flex-end; padding-right: 26px; border-color: #999; border-top-color: #777; }
.spinner { position: absolute; right: -2px; top: -2px; bottom: -2px; width: 26px; background: #f0f0f0; border: 2px solid #c6c6c6; box-sizing: border-box; display: flex; flex-direction: column; font-size: 9px; line-height: 14px; text-align: center; color: #111; }
.spinner b { flex: 1; background: #e6e6e6; font-weight: 400; }
.tp { width: 150px !important; margin-left: 0; }
.f-row .ctl.short:last-child { margin-left: 12px; }
.group { position: relative; height: 297px; margin-top: 24px; border: 1px solid #d9d9d9; box-sizing: border-box; }
.legend { display: block; width: fit-content; margin: -11px 0 0 10px; background: #f0f0f0; padding: 0 2px; line-height: 20px; }
.g-row { display: flex; align-items: center; height: 32px; }
.g-row.first { margin-top: 18px; }
.g-row.mid { margin-top: 19px; margin-bottom: 18px; height: 34px; }
.g-row .ctl { flex: none; width: 209px; height: 32px; }
.g-row.mid .ctl { height: 34px; }
.focus { background: #cce4f7; border: 2px solid #0078d7; padding: 0 1px; }
.g-note { margin-left: 9px; }
.listbox { position: absolute; left: -2px; top: 33px; width: 209px; background: #fff; border: 1px solid #0078d7; box-sizing: border-box; box-shadow: 2px 2px 3px rgba(0, 0, 0, 0.35); z-index: 2; padding: 0; }
.opt { height: 20.500px; line-height: 20px; padding-left: 0; }
.opt.hit { background: #0078d7; color: #fff; }
.place { margin-left: 12px; width: 237px; height: 34px; box-sizing: border-box; background: #9dbdfb; border: 3px solid #bdbdbd; text-align: center; line-height: 27px; }
.g-row .exp { color: #8f8f8f; border-width: 1px; border-color: #999; padding: 0 6px; gap: 9px; margin-top: 6px; }
.chk { width: 17px; height: 17px; border: 1.5px solid #3a8ad8; background: #fff; box-sizing: border-box; }
.msg { margin: 47px 0 0; padding-left: 68px; white-space: nowrap; }
.redbox { position: absolute; left: 128px; top: 9px; width: 245px; height: 161px; border: 9px solid #fe0000; border-radius: 4px; box-sizing: border-box; z-index: 3; }

.dim { position: absolute; left: 0; top: 698px; width: 2000px; height: 387px; background: rgba(131, 131, 131, 0.58); }
.headline {
  position: absolute;
  left: 83px;
  top: 696px;
  display: flex;
  align-items: baseline;
  gap: 66px;
  font-size: 242px;
  line-height: 350px;
  font-weight: 700;
  color: #000;
  white-space: nowrap;
  font-family: "Noto Sans", "Noto Sans Thai", "DejaVu Sans", sans-serif;
  transform: scaleX(0.935);
  transform-origin: left top;
  text-shadow: 0 15px 7px rgba(0, 0, 0, 0.22), 0 0 13px #b4b4b4, 0 0 13px #b4b4b4, 0 0 22px #b0b0b0;
}
.th { font-size: 266px; }
</style>
